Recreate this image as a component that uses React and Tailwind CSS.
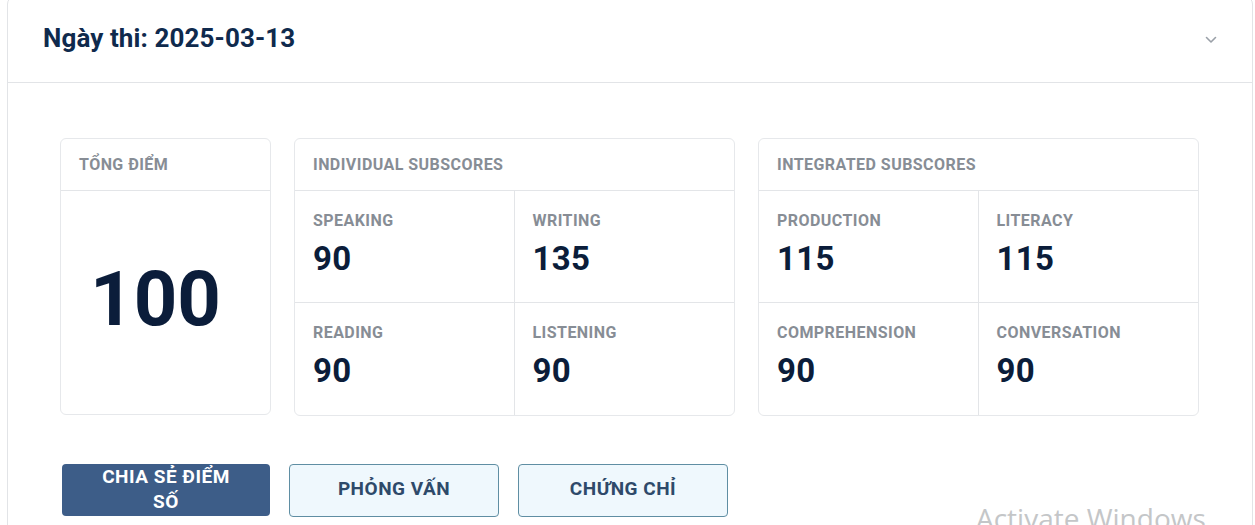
import React from "react";

function Cell({ label, value, right, bottom }) {
  return (
    <div
      className={
        "h-[112px] pt-[20px] pl-[18px] " +
        (right ? "border-r border-[#e3e5e8] " : "") +
        (bottom ? "border-b border-[#e3e5e8]" : "")
      }
    >
      <div className="text-[16px] leading-5 font-bold text-[#878d95] tracking-[0.45px]">{label}</div>
      <div className="mt-[10px] text-[33px] leading-[36px] font-bold text-[#0b1d3a] tracking-[0.3px]">{value}</div>
    </div>
  );
}

function SubCard({ title, items }) {
  return (
    <div className="rounded-md border border-[#e6e8eb] bg-white flex flex-col">
      <div className="h-[52px] flex items-center pl-[18px] border-b border-[#e3e5e8]">
        <span className="text-[16px] font-bold text-[#878d95] tracking-[0.45px]">{title}</span>
      </div>
      <div className="grid grid-cols-2">
        <Cell label={items[0][0]} value={items[0][1]} right bottom />
        <Cell label={items[1][0]} value={items[1][1]} bottom />
        <Cell label={items[2][0]} value={items[2][1]} right />
        <Cell label={items[3][0]} value={items[3][1]} />
      </div>
    </div>
  );
}

export default function App() {
  return (
    <div
      className="relative w-[1255px] h-[525px] overflow-hidden bg-white"
      style={{ fontFamily: "Roboto, 'Noto Sans', sans-serif" }}
    >
      <div className="ml-[7px] mr-[2px] -mt-[4px] rounded-lg border border-[#e2e4e7] bg-white">
        <div className="h-[86px] pb-[2px] flex items-center justify-between pl-[35px] pr-[35px] border-b border-[#e2e4e7]">
          <h2 className="text-[26px] font-bold text-[#0f2a4d] tracking-[0.1px]">Ngày thi: 2025-03-13</h2>
          <svg width="12" height="8" viewBox="0 0 12 8" fill="none" className="mt-[2px]">
            <path d="M1.5 1.5 L6 6 L10.5 1.5" stroke="#9aa0a8" strokeWidth="1.6" strokeLinecap="round" strokeLinejoin="round" />
          </svg>
        </div>
        <div className="px-[52px] pt-[55px] pb-[40px]">
          <div className="grid grid-cols-[211px_441px_441px] gap-[23px]">
            <div className="rounded-md border border-[#e6e8eb] bg-white flex flex-col h-[277px]">
              <div className="h-[52px] flex items-center pl-[18px] border-b border-[#e3e5e8]">
                <span className="text-[16px] font-bold text-[#878d95] tracking-[0.45px]">TỔNG ĐIỂM</span>
              </div>
              <div className="flex-1 flex items-center justify-center pb-[8px] pr-[20px]">
                <span className="text-[76px] leading-none font-bold text-[#0b1d3a]">100</span>
              </div>
            </div>
            <SubCard
              title="INDIVIDUAL SUBSCORES"
              items={[["SPEAKING", "90"], ["WRITING", "135"], ["READING", "90"], ["LISTENING", "90"]]}
            />
            <SubCard
              title="INTEGRATED SUBSCORES"
              items={[["PRODUCTION", "115"], ["LITERACY", "115"], ["COMPREHENSION", "90"], ["CONVERSATION", "90"]]}
            />
          </div>
          <div className="mt-[48px] ml-[2px] flex gap-[19px]">
            <button className="w-[208px] h-[52px] rounded-[4px] bg-[#3d5d88] text-white text-[19px] font-bold leading-[25px] tracking-[0.5px] pb-[3px] flex flex-col items-center justify-center">
              <span className="block">CHIA SẺ ĐIỂM</span>
              <span className="block">SỐ</span>
            </button>
            <button className="w-[210px] h-[53px] rounded-[4px] bg-[#eff8fd] border border-[#5f8ea3] text-[#2e4a6a] text-[19px] font-bold tracking-[0.5px] pb-[2px]">
              PHỎNG VẤN
            </button>
            <button className="w-[210px] h-[53px] rounded-[4px] bg-[#eff8fd] border border-[#5f8ea3] text-[#2e4a6a] text-[19px] font-bold tracking-[0.5px] pb-[2px]">
              CHỨNG CHỈ
            </button>
          </div>
        </div>
      </div>
      <div
        className="absolute left-[976px] top-[497px] text-[28px] text-[#c4c6c8] whitespace-nowrap"
        style={{ fontFamily: "'Open Sans', 'Noto Sans', sans-serif" }}
      >
        Activate Windows
      </div>
    </div>
  );
}
